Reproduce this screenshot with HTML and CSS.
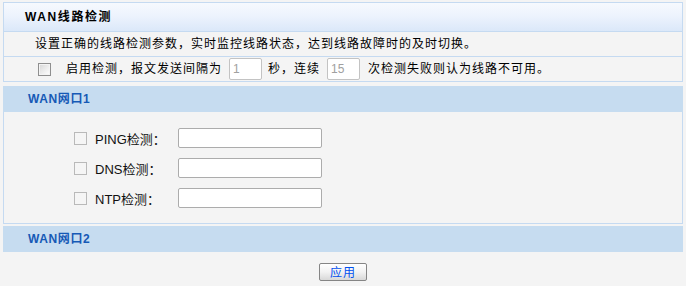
FILE: index.html
```html
<!DOCTYPE html>
<html lang="zh-CN">
<head>
<meta charset="UTF-8">
<title>WAN线路检测</title>
<link rel="stylesheet" href="styles.css">
</head>
<body>

<div class="wrap">
    <div class="box">
        <div class="box-head">WAN线路检测</div>
        <div class="row row-desc">设置正确的线路检测参数，实时监控线路状态，达到线路故障时的及时切换。</div>
        <div class="row row-opt">
            <input type="checkbox" class="chk chk-main" id="enable">
            <span class="txt">启用检测，报文发送间隔为</span>
            <input type="text" class="num" value="1" disabled>
            <span class="txt">秒，连续</span>
            <input type="text" class="num" value="15" disabled>
            <span class="txt">次检测失败则认为线路不可用。</span>
        </div>
    </div>

    <div class="band">WAN网口1</div>
    <div class="panel">
        <div class="field">
            <input type="checkbox" class="chk">
            <label class="lbl">PING检测：</label>
            <input type="text" class="addr">
        </div>
        <div class="field">
            <input type="checkbox" class="chk">
            <label class="lbl">DNS检测：</label>
            <input type="text" class="addr">
        </div>
        <div class="field">
            <input type="checkbox" class="chk">
            <label class="lbl">NTP检测：</label>
            <input type="text" class="addr">
        </div>
    </div>

    <div class="band band-2">WAN网口2</div>

    <div class="actions">
        <button class="btn">应用</button>
    </div>
</div>

</body>
</html>
```

FILE: styles.css
```css
body {
    margin: 0;
    background: #f4f4f4;
    font-family: "Liberation Sans", "Noto Sans CJK SC", sans-serif;
    font-size: 12px;
    color: #000;
}

.wrap {
    margin: 2px 3px 0 3px;
}

.box {
    border: 1px solid #c5daf1;
}

.box-head {
    height: 28px;
    line-height: 28px;
    padding-left: 21px;
    font-size: 12px;
    font-weight: bold;
    letter-spacing: 1.6px;
    background: linear-gradient(to bottom, #f6f9fe 0%, #edf3fd 45%, #dbe8f9 100%);
    border-bottom: 1px solid #c5daf1;
}

.row {
    height: 24px;
    line-height: 24px;
    letter-spacing: 1px;
}

.row-desc {
    padding-left: 31px;
    border-bottom: 1px solid #c5daf1;
}

.row-opt {
    display: flex;
    align-items: center;
    padding-left: 34px;
}

.chk {
    appearance: none;
    -webkit-appearance: none;
    width: 13px;
    height: 13px;
    margin: 0;
    box-sizing: border-box;
    border: 1px solid #b9b9b9;
    background: #f5f5f5;
    flex: none;
}

.chk-main {
    border-color: #8f8f8f;
    background: linear-gradient(135deg, #d6d6d6 0%, #f0f0f0 60%, #ffffff 100%);
    box-shadow: inset 0 0 0 1px #f4f4f4;
    margin-right: 15px;
}

.num {
    width: 33px;
    height: 22px;
    box-sizing: border-box;
    margin: 0 6px 0 7px;
    padding: 0 0 0 3px;
    border: 1px solid #c3c3c3;
    border-radius: 2px;
    background: #fff;
    color: #a0a0a0;
    font-family: "Liberation Sans", sans-serif;
    font-size: 12px;
}

.num + .txt + .num {
    margin-right: 8px;
}

.band {
    height: 26px;
    line-height: 26px;
    margin-top: 4px;
    padding-left: 25px;
    background: #c6dcf0;
    color: #1659b6;
    font-weight: bold;
    font-size: 12px;
    letter-spacing: 0.6px;
}

.band-2 {
    margin-top: 2px;
}

.panel {
    border: 1px solid #c5daf1;
    border-top: none;
    padding: 16px 0 15px 70px;
    display: flex;
    flex-direction: column;
    gap: 10px;
}

.field {
    display: flex;
    align-items: center;
    height: 20px;
}

.lbl {
    width: 83px;
    margin-left: 8px;
    font-size: 13px;
    color: #111;
}

.addr {
    width: 144px;
    height: 20px;
    box-sizing: border-box;
    margin: 0;
    border: 1px solid #acacac;
    border-radius: 2px;
    background: #fff;
}

.actions {
    display: flex;
    justify-content: center;
    padding-top: 11px;
}

.btn {
    width: 48px;
    height: 18px;
    margin-left: 0;
    padding: 0;
    border: 1px solid #858585;
    border-radius: 2px;
    background: linear-gradient(to bottom, #ffffff 0%, #f2f2f2 50%, #d8d8d8 100%);
    color: #0050f0;
    font-family: "Noto Sans CJK SC", sans-serif;
    font-size: 12px;
    line-height: 16px;
    letter-spacing: 1px;
    cursor: pointer;
}
```
